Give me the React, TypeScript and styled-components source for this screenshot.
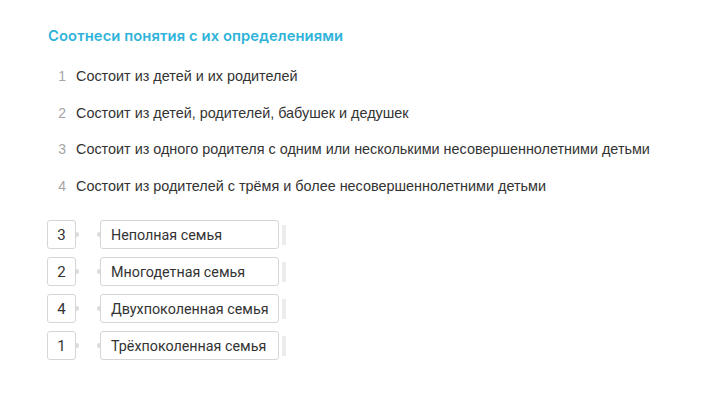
import React from "react";
import styled, { createGlobalStyle } from "styled-components";

const GlobalStyle = createGlobalStyle`
  html, body {
    margin: 0;
    padding: 0;
    background: #ffffff;
  }
  body {
    font-family: "Liberation Sans", Arial, sans-serif;
    color: #333333;
  }
`;

const definitions = [
  "Состоит из детей и их родителей",
  "Состоит из детей, родителей, бабушек и дедушек",
  "Состоит из одного родителя с одним или несколькими несовершеннолетними детьми",
  "Состоит из родителей с трёмя и более несовершеннолетними детьми",
];

const pairs = [
  { answer: "3", term: "Неполная семья" },
  { answer: "2", term: "Многодетная семья" },
  { answer: "4", term: "Двухпоколенная семья" },
  { answer: "1", term: "Трёхпоколенная семья" },
];

const Page = styled.div`
  padding: 27px 0 0 48px;
`;

const Title = styled.h2`
  margin: 0 0 23px;
  font-family: Inter, "Open Sans", sans-serif;
  font-size: 14.75px;
  font-weight: 600;
  line-height: 18px;
  color: #2fb3da;
  letter-spacing: 0.1px;
`;

const DefList = styled.ol`
  list-style: none;
  margin: 0 0 6px;
  padding: 0;
`;

const DefItem = styled.li`
  display: flex;
  align-items: baseline;
  font-size: 14.4px;
  line-height: 17px;
  height: 36.5px;
`;

const DefNumber = styled.span`
  width: 18px;
  text-align: right;
  margin-right: 10px;
  font-size: 14px;
  color: #a5a5a5;
`;

const DefText = styled.span`
  color: #333333;
`;

const Pairs = styled.div`
  display: flex;
  flex-direction: column;
  gap: 8px;
`;

const Row = styled.div`
  display: flex;
  align-items: center;
  height: 29px;
`;

const AnswerBox = styled.div`
  box-sizing: border-box;
  width: 29px;
  height: 29px;
  margin-left: -1px;
  border: 1px solid #d6d6d6;
  border-radius: 3px;
  display: flex;
  align-items: center;
  justify-content: center;
  font-family: Roboto, "Liberation Sans", sans-serif;
  font-size: 15px;
  color: #333333;
`;

const Dot = styled.span<{ $side: "left" | "right" }>`
  width: 3px;
  height: 5px;
  background: #dcdcdc;
  border-radius: ${(p) => (p.$side === "right" ? "0 3px 3px 0" : "3px 0 0 3px")};
`;

const Gap = styled.span`
  width: 18px;
`;

const TermBox = styled.div`
  box-sizing: border-box;
  width: 179px;
  height: 29px;
  padding: 0 10px;
  border: 1px solid #d6d6d6;
  border-radius: 3px;
  display: flex;
  align-items: center;
  font-family: Roboto, "Liberation Sans", sans-serif;
  font-size: 14.3px;
  color: #333333;
  white-space: nowrap;
`;

const Handle = styled.span`
  width: 4px;
  height: 20px;
  margin-left: 3px;
  background: #ececec;
`;

export default function App() {
  return (
    <>
      <GlobalStyle />
      <Page>
        <Title>Соотнеси понятия с их определениями</Title>
        <DefList>
          {definitions.map((text, i) => (
            <DefItem key={i}>
              <DefNumber>{i + 1}</DefNumber>
              <DefText>{text}</DefText>
            </DefItem>
          ))}
        </DefList>
        <Pairs>
          {pairs.map((p) => (
            <Row key={p.term}>
              <AnswerBox>{p.answer}</AnswerBox>
              <Dot $side="right" />
              <Gap />
              <Dot $side="left" />
              <TermBox>{p.term}</TermBox>
              <Handle />
            </Row>
          ))}
        </Pairs>
      </Page>
    </>
  );
}
